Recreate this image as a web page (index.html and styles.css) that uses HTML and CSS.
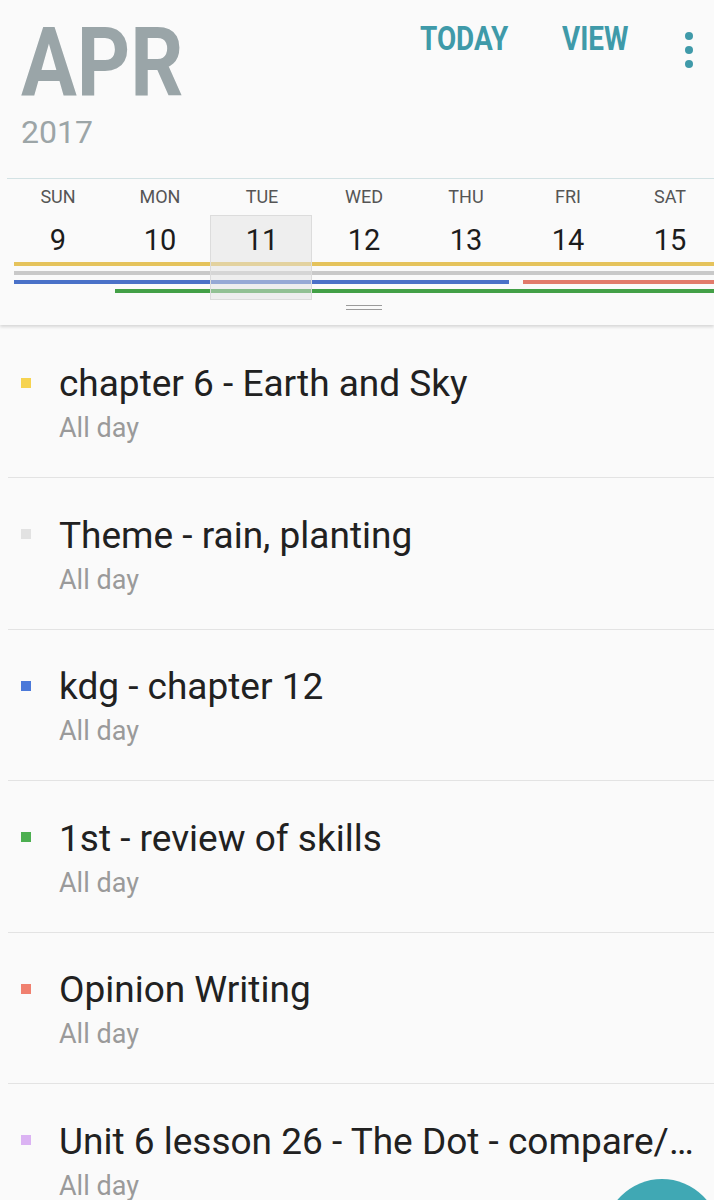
FILE: index.html
```html
<!DOCTYPE html>
<html lang="en">
<head>
  <meta charset="UTF-8">
  <title>Calendar - April 2017</title>
  <link rel="stylesheet" href="styles.css">
</head>
<body>
  <div class="panel">
    <div class="top">
      <div class="month">
        <div class="mon">APR</div>
        <div class="year">2017</div>
      </div>
      <div class="actions">
        <span class="act today">TODAY</span>
        <span class="act view">VIEW</span>
        <svg class="more" width="16" height="44" viewBox="0 0 16 44">
          <circle cx="8" cy="8" r="4"/>
          <circle cx="8" cy="22" r="4"/>
          <circle cx="8" cy="36" r="4"/>
        </svg>
      </div>
    </div>

    <div class="week">
      <div class="days">
        <div class="day"><span class="dn">SUN</span><span class="dd">9</span></div>
        <div class="day"><span class="dn">MON</span><span class="dd">10</span></div>
        <div class="day"><span class="dn">TUE</span><span class="dd">11</span></div>
        <div class="day"><span class="dn">WED</span><span class="dd">12</span></div>
        <div class="day"><span class="dn">THU</span><span class="dd">13</span></div>
        <div class="day"><span class="dn">FRI</span><span class="dd">14</span></div>
        <div class="day"><span class="dn">SAT</span><span class="dd">15</span></div>
      </div>
      <div class="bars">
        <div class="bar-row"><div class="bar yellow full"></div></div>
        <div class="bar-row"><div class="bar grey full"></div></div>
        <div class="bar-row">
          <div class="bar blue b-blue"></div>
          <div class="bar red b-red"></div>
        </div>
        <div class="bar-row"><div class="bar green b-green"></div></div>
      </div>
      <div class="handle"></div>
      <div class="selected"></div>
    </div>
  </div>

  <div class="events">
    <div class="event">
      <span class="dot" style="background:#f6d350"></span>
      <div class="info">
        <div class="title">chapter 6 - Earth and Sky</div>
        <div class="sub">All day</div>
      </div>
    </div>
    <div class="event">
      <span class="dot" style="background:#e2e2e2"></span>
      <div class="info">
        <div class="title">Theme - rain, planting</div>
        <div class="sub">All day</div>
      </div>
    </div>
    <div class="event">
      <span class="dot" style="background:#4b79d9"></span>
      <div class="info">
        <div class="title">kdg - chapter 12</div>
        <div class="sub">All day</div>
      </div>
    </div>
    <div class="event">
      <span class="dot" style="background:#4caf50"></span>
      <div class="info">
        <div class="title">1st - review of skills</div>
        <div class="sub">All day</div>
      </div>
    </div>
    <div class="event">
      <span class="dot" style="background:#f0806f"></span>
      <div class="info">
        <div class="title">Opinion Writing</div>
        <div class="sub">All day</div>
      </div>
    </div>
    <div class="event">
      <span class="dot" style="background:#dbb3f3"></span>
      <div class="info">
        <div class="title">Unit 6 lesson 26 - The Dot - compare/contrast</div>
        <div class="sub">All day</div>
      </div>
    </div>
  </div>

  <div class="fab"></div>
</body>
</html>
```

FILE: styles.css
```css
body { margin: 0; height: 1200px; overflow: hidden; position: relative; background: #fafafa; font-family: Roboto, "Noto Sans", sans-serif; }

.panel { background: #fafafa; padding-bottom: 15px; box-shadow: 0 2px 3px rgba(0,0,0,0.14); position: relative; z-index: 1; }
.top { display: flex; justify-content: space-between; padding: 22px 0 0 21px; height: 178px; box-sizing: border-box; }
.mon { font-size: 96px; line-height: 80px; font-weight: 700; color: #9aa5a8; transform: scaleX(0.865); transform-origin: left center; }
.year { font-size: 32px; line-height: 32px; color: #9ca5a7; margin-top: 14px; }

.actions { display: flex; align-items: flex-start; margin-top: -1px; }
.act { display: inline-block; font-size: 34px; line-height: 34px; font-weight: 700; color: #3f9aa9; transform: scaleX(0.82); transform-origin: left center; }
.today { width: 142px; }
.view { width: 119px; }
.more { fill: #3f9aa9; margin-top: 7px; margin-right: 17px; }

.week { position: relative; margin-left: 7px; width: 714px; border-top: 1px solid #d3e2e4; }
.days { display: grid; grid-template-columns: repeat(7, 102px); position: relative; z-index: 2; }
.day { display: flex; flex-direction: column; align-items: center; }
.dn { font-size: 18px; line-height: 22px; color: #555; margin-top: 7px; }
.dd { font-size: 29px; line-height: 36px; color: #1c1c1c; margin-top: 14px; }

.bars { margin-top: 4px; padding-left: 7px; display: flex; flex-direction: column; gap: 5px; }
.bar-row { display: flex; height: 4px; }
.bar { height: 4px; }
.full { flex: 1; }
.yellow { background: #e5c35c; }
.grey { background: #c9c9c9; }
.blue { background: #4a71c8; }
.red { background: #e27a6b; }
.green { background: #43a047; }
.b-blue { width: 495px; }
.b-red { flex: 1; margin-left: 14px; }
.b-green { flex: 1; margin-left: 101px; }

.handle { width: 36px; height: 5px; margin: 12px 0 0 339px; border-top: 1.5px solid #9b9b9b; border-bottom: 1.5px solid #9b9b9b; box-sizing: border-box; }

.selected { position: absolute; z-index: 1; left: 203px; top: 36px; width: 102px; height: 85px; background: rgba(225,225,225,0.5); border: 1px solid #dcdcdc; box-sizing: border-box; }

.events { margin: 1.5px 0 0 8px; }
.event { display: flex; padding: 35.5px 0 32px 13px; border-bottom: 1px solid #e3e3e3; }
.dot { width: 10px; height: 10px; flex: none; margin: 15.5px 28px 0 0; }
.info { min-width: 0; max-width: 645px; }
.title { font-size: 37px; line-height: 44px; color: #212121; white-space: nowrap; overflow: hidden; text-overflow: ellipsis; }
.sub { font-size: 27px; line-height: 34px; color: #9a9a9a; margin-top: 5px; }

.fab { position: absolute; left: 604px; top: 1179px; width: 116px; height: 116px; border-radius: 50%; background: #40a8b4; }
```
